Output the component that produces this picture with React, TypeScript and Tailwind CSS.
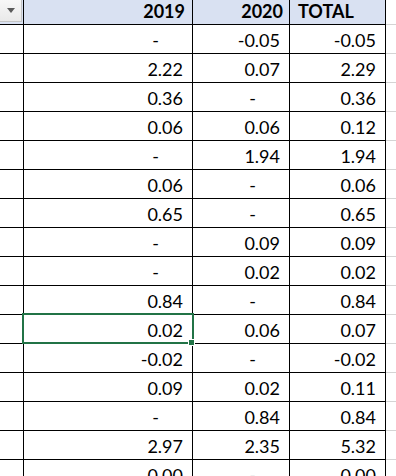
import React from 'react';

type Row = [string, string, string];

const rows: Row[] = [
  ['-', '-0.05', '-0.05'],
  ['2.22', '0.07', '2.29'],
  ['0.36', '-', '0.36'],
  ['0.06', '0.06', '0.12'],
  ['-', '1.94', '1.94'],
  ['0.06', '-', '0.06'],
  ['0.65', '-', '0.65'],
  ['-', '0.09', '0.09'],
  ['-', '0.02', '0.02'],
  ['0.84', '-', '0.84'],
  ['0.02', '0.06', '0.07'],
  ['-0.02', '-', '-0.02'],
  ['0.09', '0.02', '0.11'],
  ['-', '0.84', '0.84'],
  ['2.97', '2.35', '5.32'],
  ['0.00', '-', '0.00'],
];

const Value = ({ v }: { v: string }) =>
  v === '-' ? <span className="mr-[24px]">-</span> : <span>{v}</span>;

const DataRow = ({ row }: { row: Row }) => (
  <div className="flex h-[29px] shrink-0">
    <div className="w-[24px] shrink-0 border-r border-b border-black" />
    <div className="w-[169px] shrink-0 border-r border-b border-black flex items-end justify-end pr-[9px] pb-[4px]">
      <Value v={row[0]} />
    </div>
    <div className="w-[97px] shrink-0 border-r border-b border-black flex items-end justify-end pr-[9px] pb-[4px]">
      <Value v={row[1]} />
    </div>
    <div className="w-[96px] shrink-0 border-r border-b border-black flex items-end justify-end pr-[9px] pb-[4px]">
      <Value v={row[2]} />
    </div>
    <div className="flex-1 border-b border-[#d4d4d4]" />
  </div>
);

export default function App() {
  return (
    <div
      className="relative w-[396px] h-[476px] overflow-hidden bg-white text-black text-[18px] leading-none"
      style={{ fontFamily: 'Lato, "Open Sans", sans-serif' }}
    >
      {/* header */}
      <div className="flex h-[25px]">
        <div className="w-[24px] shrink-0 border-r border-b border-black bg-[#d9e1f2]">
          <div className="w-[22px] h-[22px] bg-gradient-to-b from-[#f7f7f7] to-[#e9e9e9] border-r border-b border-[#c4c4c4] flex items-center justify-center">
            <svg width="8" height="5" viewBox="0 0 8 5">
              <path d="M0 0 H8 L4 5 Z" fill="#5a5a5a" />
            </svg>
          </div>
        </div>
        <div className="w-[169px] shrink-0 border-r border-b border-black bg-[#d9e1f2] flex items-end justify-end pr-[7px] pb-[4px] font-bold">
          2019
        </div>
        <div className="w-[97px] shrink-0 border-r border-b border-black bg-[#d9e1f2] flex items-end justify-end pr-[6px] pb-[4px] font-bold">
          2020
        </div>
        <div className="w-[96px] shrink-0 border-r border-b border-black bg-[#d9e1f2] flex items-end pl-[8px] pb-[4px] font-bold">
          TOTAL
        </div>
        <div className="flex-1 border-b border-[#d4d4d4]" />
      </div>

      {rows.map((row, i) => (
        <DataRow key={i} row={row} />
      ))}

      {/* active cell */}
      <div className="absolute left-[22px] top-[313px] w-[172px] h-[31px] border-2 border-[#217346]" />
      <div className="absolute left-[188px] top-[339px] w-[7px] h-[7px] bg-[#217346] border border-white" />
    </div>
  );
}
